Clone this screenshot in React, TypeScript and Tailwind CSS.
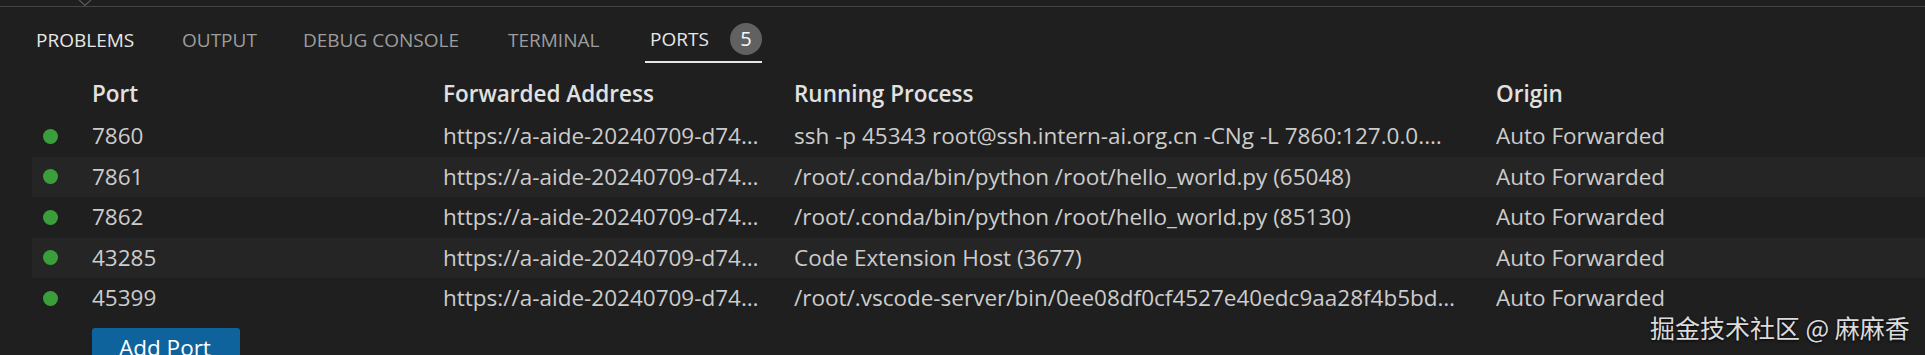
import React from "react";

const rows = [
  {
    port: "7860",
    addr: "https://a-aide-20240709-d74…",
    proc: "ssh -p 45343 root@ssh.intern-ai.org.cn -CNg -L 7860:127.0.0.…",
  },
  {
    port: "7861",
    addr: "https://a-aide-20240709-d74…",
    proc: "/root/.conda/bin/python /root/hello_world.py (65048)",
  },
  {
    port: "7862",
    addr: "https://a-aide-20240709-d74…",
    proc: "/root/.conda/bin/python /root/hello_world.py (85130)",
  },
  {
    port: "43285",
    addr: "https://a-aide-20240709-d74…",
    proc: "Code Extension Host (3677)",
  },
  {
    port: "45399",
    addr: "https://a-aide-20240709-d74…",
    proc: "/root/.vscode-server/bin/0ee08df0cf4527e40edc9aa28f4b5bd…",
  },
];

export default function App() {
  return (
    <div className="relative w-[1925px] h-[355px] overflow-hidden bg-[#1f1f1f] font-['Open_Sans','Noto_Sans',sans-serif]">
      {/* top sash line */}
      <div className="relative h-[7px] border-b border-[#444444]">
        <svg
          className="absolute left-[77px] top-[-1px]"
          width="16"
          height="8"
          viewBox="0 0 16 8"
        >
          <polyline points="1,0 8,6.5 15,0" fill="none" stroke="#5a5a5a" strokeWidth="1.2" />
        </svg>
      </div>

      {/* tabs */}
      <div className="flex h-[56px] pl-[31px] text-[19px] leading-none">
        <div className="w-[109px] h-full flex items-center pt-[12px] pl-[5px] text-[#e7e7e7] whitespace-nowrap border-b-2 border-transparent">
          PROBLEMS
        </div>
        <div className="ml-[37px] w-[86px] h-full flex items-center pt-[12px] pl-[5px] text-[#9d9d9d] whitespace-nowrap border-b-2 border-transparent">
          OUTPUT
        </div>
        <div className="ml-[35px] w-[170px] h-full flex items-center pt-[12px] pl-[5px] text-[#9d9d9d] whitespace-nowrap border-b-2 border-transparent">
          DEBUG CONSOLE
        </div>
        <div className="ml-[35px] w-[106px] h-full flex items-center pt-[12px] pl-[5px] text-[#9d9d9d] whitespace-nowrap border-b-2 border-transparent">
          TERMINAL
        </div>
        <div className="ml-[36px] w-[117px] h-[56px] flex items-center pt-[10px] pl-[5px] text-[#e7e7e7] whitespace-nowrap border-b-2 border-[#e7e7e7]">
          <span>PORTS</span>
          <span className="ml-auto w-[32px] h-[32px] rounded-full bg-[#616161] text-[#f8f8f8] text-[20px] flex items-center justify-center">
            5
          </span>
        </div>
      </div>

      {/* table */}
      <div className="mt-[10px] ml-[32px] text-[22.5px]">
        <div className="flex h-[43px] pb-[1px] items-center font-semibold text-[#e1e1e1] whitespace-nowrap">
          <div className="w-[60px]" />
          <div className="w-[351px]">Port</div>
          <div className="w-[351px]">Forwarded Address</div>
          <div className="w-[702px]">Running Process</div>
          <div>Origin</div>
        </div>
        {rows.map((r, i) => (
          <div
            key={r.port}
            className={
              "flex h-[40.5px] items-center text-[#cccccc] whitespace-nowrap " +
              (i % 2 === 1 ? "bg-[#252525]" : "bg-[#1f1f1f]")
            }
          >
            <div className="w-[60px] flex items-center">
              <span className="ml-[11px] w-[15px] h-[15px] rounded-full bg-[#3a9f3a]" />
            </div>
            <div className="w-[351px] overflow-hidden">{r.port}</div>
            <div className="w-[351px] overflow-hidden pr-[8px]">{r.addr}</div>
            <div className="w-[702px] overflow-hidden pr-[8px]">{r.proc}</div>
            <div>Auto Forwarded</div>
          </div>
        ))}
        <div className="mt-[9.5px] ml-[60px]">
          <button className="w-[148px] h-[41px] rounded-[3px] bg-[#0e639c] text-white text-left pl-[27px] text-[22.5px] leading-none">
            Add Port
          </button>
        </div>
      </div>

      {/* watermark */}
      <div className="absolute left-[1650px] top-[310px] text-[25px] leading-[34px] text-[#dcdcdc] whitespace-nowrap font-['Noto_Sans_CJK_SC',sans-serif] [text-shadow:0_1px_3px_rgba(0,0,0,0.9)]">
        掘金技术社区 @ 麻麻香
      </div>
    </div>
  );
}
